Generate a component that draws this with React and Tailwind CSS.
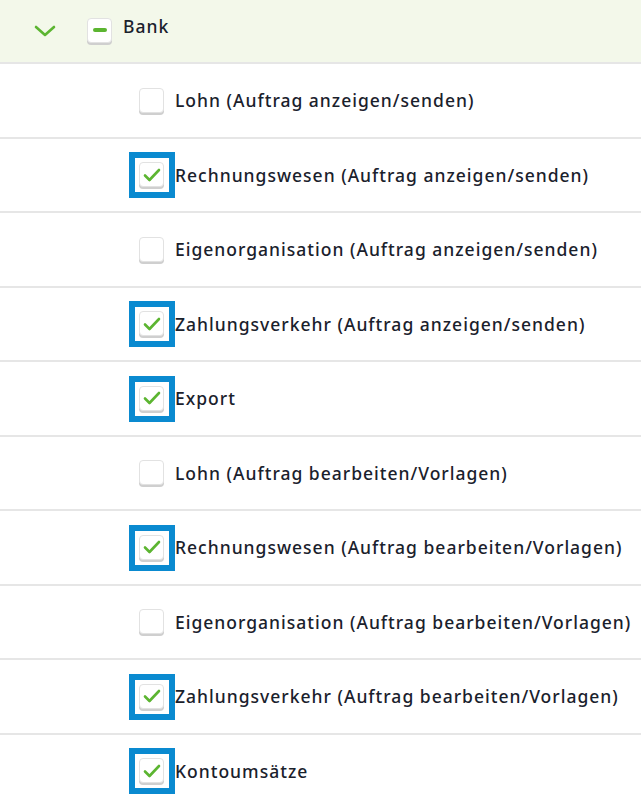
import React from "react";

const rows = [
  { label: "Lohn (Auftrag anzeigen/senden)", checked: false },
  { label: "Rechnungswesen (Auftrag anzeigen/senden)", checked: true },
  { label: "Eigenorganisation (Auftrag anzeigen/senden)", checked: false },
  { label: "Zahlungsverkehr (Auftrag anzeigen/senden)", checked: true },
  { label: "Export", checked: true },
  { label: "Lohn (Auftrag bearbeiten/Vorlagen)", checked: false },
  { label: "Rechnungswesen (Auftrag bearbeiten/Vorlagen)", checked: true },
  { label: "Eigenorganisation (Auftrag bearbeiten/Vorlagen)", checked: false },
  { label: "Zahlungsverkehr (Auftrag bearbeiten/Vorlagen)", checked: true },
  { label: "Kontoumsätze", checked: true },
];

const Box = ({ checked, children }) => (
  <span className="relative flex h-[25px] w-[25px] shrink-0 items-center justify-center rounded-[4px] border border-[#e2e2e2] bg-white shadow-[0_2px_0_#cfcfcf]">
    {checked && (
      <span className="absolute -top-[11px] -left-[11px] h-[46px] w-[46px] border-[6px] border-[#0a8ad0]" />
    )}
    {children}
  </span>
);

const Check = () => (
  <svg width="18" height="16" viewBox="0 0 18 16" fill="none">
    <path d="M2 8.5l4.5 4.5L16 3" stroke="#5cb531" strokeWidth="2.6" strokeLinecap="round" strokeLinejoin="round" />
  </svg>
);

export default function App() {
  return (
    <div className="w-[641px] bg-white font-['Noto_Sans',sans-serif] text-[17.5px] font-medium tracking-[1px] text-[#1a212c]">
      <div className="flex h-[64px] items-center border-b-2 border-[#e6e6e6] bg-[#f3f8ea]">
        <svg className="ml-[34px]" width="22" height="12" viewBox="0 0 22 12" fill="none">
          <path d="M2 2l9 8 9-8" stroke="#5cb531" strokeWidth="2.6" strokeLinecap="round" strokeLinejoin="round" />
        </svg>
        <div className="ml-[31px] pb-[2px]">
          <Box checked={false}>
            <span className="h-[4px] w-[14px] rounded-[2px] bg-[#5cb531]" />
          </Box>
        </div>
        <span className="ml-[11px] pb-[10px]">Bank</span>
      </div>
      {rows.map((r, i) => (
        <div key={i} className="flex h-[74.5px] items-center border-b-2 border-[#e6e6e6] pl-[139px]">
          <Box checked={r.checked}>{r.checked && <Check />}</Box>
          <span className="ml-[11px]">{r.label}</span>
        </div>
      ))}
    </div>
  );
}
